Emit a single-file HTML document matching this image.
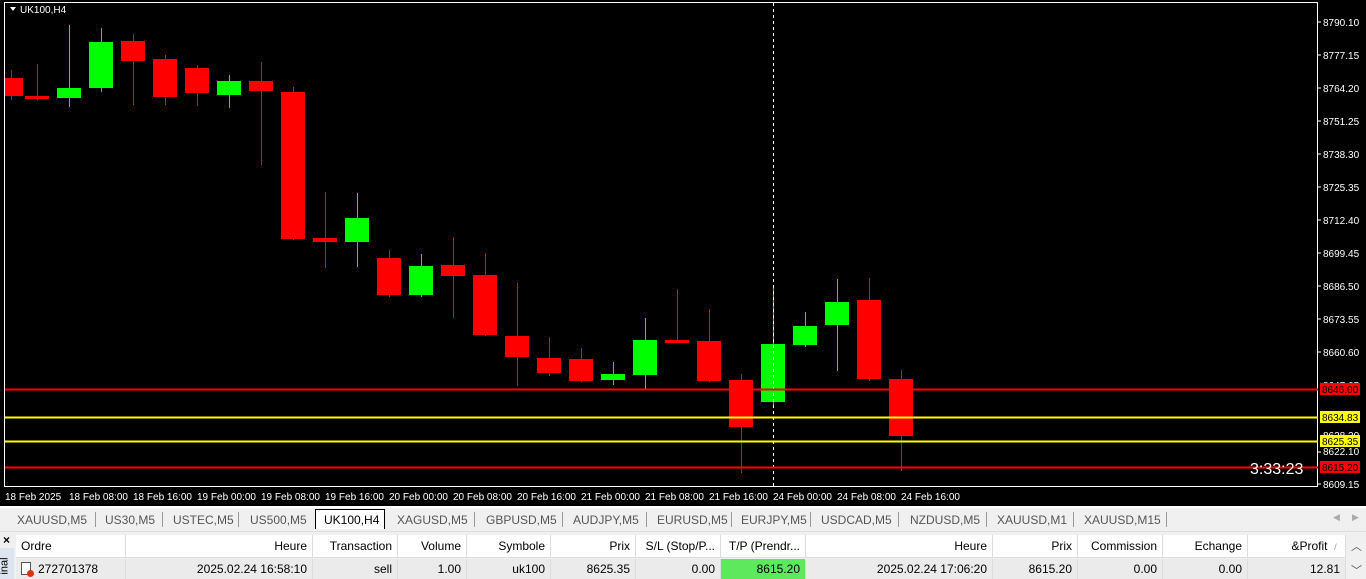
<!DOCTYPE html>
<html><head><meta charset="utf-8"><style>
body{margin:0;width:1366px;height:579px;overflow:hidden;background:#f0f0f0;font-family:"Liberation Sans",sans-serif;position:relative}
.a{position:absolute;white-space:nowrap}
#chart{position:absolute;left:0;top:0}
.tab{position:absolute;top:513px;font-size:12px;color:#555}
.sep{position:absolute;top:512px;width:1px;height:15px;background:#999}
.h{position:absolute;top:535px;height:23px;line-height:23px;font-size:12px;color:#000;background:#fff;border-right:1px solid #ddd;box-sizing:border-box;padding:0 5px;border-bottom:1px solid #ddd}
.r{position:absolute;top:559px;height:20px;line-height:20px;font-size:12px;color:#000;background:#ebebeb;border-right:1px solid #ddd;box-sizing:border-box;padding:0 5px}
</style></head><body>
<svg id="chart" width="1366" height="506" xmlns="http://www.w3.org/2000/svg" font-family="Liberation Sans, sans-serif">
<rect x="0" y="0" width="1366" height="506" fill="#000"/>
<rect x="4.5" y="2.5" width="1313" height="484" fill="none" stroke="#fff"/>
<g id="c"></g>
<line x1="773.5" y1="3" x2="773.5" y2="486" stroke="#fff" stroke-dasharray="3,3"/>
<line x1="5" y1="389.5" x2="1318" y2="389.5" stroke="#f00" stroke-width="2"/>
<line x1="5" y1="417.5" x2="1318" y2="417.5" stroke="#ff0" stroke-width="2"/>
<line x1="5" y1="441.5" x2="1318" y2="441.5" stroke="#ff0" stroke-width="2"/>
<line x1="5" y1="467.5" x2="1318" y2="467.5" stroke="#f00" stroke-width="2"/>
<path d="M10 7 L16 7 L13 11 Z" fill="#fff"/>
<text x="20" y="13" fill="#fff" font-size="10">UK100,H4</text>
<g fill="#fff" font-size="10">
<text x="1323" y="26">8790.10</text><text x="1323" y="59">8777.15</text><text x="1323" y="92">8764.20</text><text x="1323" y="125">8751.25</text><text x="1323" y="158">8738.30</text><text x="1323" y="191">8725.35</text><text x="1323" y="224">8712.40</text><text x="1323" y="257">8699.45</text><text x="1323" y="290">8686.50</text><text x="1323" y="323">8673.55</text><text x="1323" y="356">8660.60</text><text x="1323" y="389">8647.65</text><text x="1323" y="439">8628.20</text><text x="1323" y="455">8622.10</text><text x="1323" y="488">8609.15</text>
</g>
<g stroke="#fff"><line x1="1318" y1="22" x2="1321" y2="22"/><line x1="1318" y1="55" x2="1321" y2="55"/><line x1="1318" y1="88" x2="1321" y2="88"/><line x1="1318" y1="121" x2="1321" y2="121"/><line x1="1318" y1="154" x2="1321" y2="154"/><line x1="1318" y1="187" x2="1321" y2="187"/><line x1="1318" y1="220" x2="1321" y2="220"/><line x1="1318" y1="253" x2="1321" y2="253"/><line x1="1318" y1="286" x2="1321" y2="286"/><line x1="1318" y1="319" x2="1321" y2="319"/><line x1="1318" y1="352" x2="1321" y2="352"/><line x1="1318" y1="452" x2="1321" y2="452"/><line x1="1318" y1="484" x2="1321" y2="484"/></g>
<rect x="1320" y="383" width="40" height="12" fill="#f00"/><text x="1322" y="393" font-size="10" fill="#000">8646.00</text>
<rect x="1320" y="411" width="40" height="12" fill="#ff0"/><text x="1322" y="421" font-size="10" fill="#000">8634.83</text>
<rect x="1320" y="435" width="40" height="12" fill="#ff0"/><text x="1322" y="445" font-size="10" fill="#000">8625.35</text>
<rect x="1320" y="461" width="40" height="12" fill="#f00"/><text x="1322" y="471" font-size="10" fill="#000">8615.20</text>
<text x="1250" y="474" font-size="16" fill="#fff">3:33:23</text>
<g fill="#fff" font-size="10">
<text x="5" y="500">18 Feb 2025</text><text x="69" y="500">18 Feb 08:00</text><text x="133" y="500">18 Feb 16:00</text><text x="197" y="500">19 Feb 00:00</text><text x="261" y="500">19 Feb 08:00</text><text x="325" y="500">19 Feb 16:00</text><text x="389" y="500">20 Feb 00:00</text><text x="453" y="500">20 Feb 08:00</text><text x="517" y="500">20 Feb 16:00</text><text x="581" y="500">21 Feb 00:00</text><text x="645" y="500">21 Feb 08:00</text><text x="709" y="500">21 Feb 16:00</text><text x="773" y="500">24 Feb 00:00</text><text x="837" y="500">24 Feb 08:00</text><text x="901" y="500">24 Feb 16:00</text>
</g>
</svg>
<div class="a" style="left:0;top:506px;width:1366px;height:2px;background:#fff"></div>
<div class="a" style="left:315px;top:509px;width:70px;height:20px;background:#fff;border:1px solid #000;border-bottom:none;box-sizing:border-box"></div>
<span class="tab" style="left:17px">XAUUSD,M5</span><span class="sep" style="left:95px"></span>
<span class="tab" style="left:105px">US30,M5</span><span class="sep" style="left:162px"></span>
<span class="tab" style="left:173px">USTEC,M5</span><span class="sep" style="left:238px"></span>
<span class="tab" style="left:250px">US500,M5</span>
<span class="tab" style="left:324px;color:#000">UK100,H4</span>
<span class="tab" style="left:397px">XAGUSD,M5</span><span class="sep" style="left:474px"></span>
<span class="tab" style="left:486px">GBPUSD,M5</span><span class="sep" style="left:562px"></span>
<span class="tab" style="left:573px">AUDJPY,M5</span><span class="sep" style="left:646px"></span>
<span class="tab" style="left:657px">EURUSD,M5</span><span class="sep" style="left:731px"></span>
<span class="tab" style="left:741px">EURJPY,M5</span><span class="sep" style="left:810px"></span>
<span class="tab" style="left:821px">USDCAD,M5</span><span class="sep" style="left:898px"></span>
<span class="tab" style="left:910px">NZDUSD,M5</span><span class="sep" style="left:986px"></span>
<span class="tab" style="left:997px">XAUUSD,M1</span><span class="sep" style="left:1073px"></span>
<span class="tab" style="left:1084px">XAUUSD,M15</span><span class="sep" style="left:1166px"></span>
<span class="a" style="left:1333px;top:512px;font-size:9px;color:#aaa">◀</span><span class="a" style="left:1352px;top:512px;font-size:9px;color:#aaa">▶</span>
<div class="a" style="left:0;top:531px;width:1366px;height:1px;background:#ddd"></div>
<span class="a" style="left:3px;top:533px;font-size:12px;font-weight:bold">×</span>
<div class="a" style="left:0;top:548px;width:14px;height:31px;background:#dde6f0"></div>
<span class="a" style="left:-4px;top:560px;font-size:11px;transform:rotate(-90deg)">inal</span>
<div class="h" style="left:16px;width:110px">Ordre</div>
<div class="h" style="left:126px;width:187px;text-align:right">Heure</div>
<div class="h" style="left:313px;width:85px;text-align:right">Transaction</div>
<div class="h" style="left:398px;width:69px;text-align:right">Volume</div>
<div class="h" style="left:467px;width:84px;text-align:right">Symbole</div>
<div class="h" style="left:551px;width:85px;text-align:right">Prix</div>
<div class="h" style="left:636px;width:85px;text-align:right">S/L (Stop/P...</div>
<div class="h" style="left:721px;width:85px;text-align:right">T/P (Prendr...</div>
<div class="h" style="left:806px;width:187px;text-align:right">Heure</div>
<div class="h" style="left:993px;width:85px;text-align:right">Prix</div>
<div class="h" style="left:1078px;width:85px;text-align:right">Commission</div>
<div class="h" style="left:1163px;width:85px;text-align:right">Echange</div>
<div class="h" style="left:1248px;width:98px;text-align:right">&amp;Profit &nbsp;<span style="color:#999;font-size:9px">/</span>&nbsp;</div>
<div class="r" style="left:16px;width:110px;padding-left:22px">272701378</div>
<div class="a" style="left:21px;top:562px;width:10px;height:13px;border:1px solid #555;background:#fff;box-sizing:border-box"></div>
<div class="a" style="left:27px;top:570px;width:7px;height:7px;border-radius:50%;background:#e03010"></div>
<div class="r" style="left:126px;width:187px;text-align:right">2025.02.24 16:58:10</div>
<div class="r" style="left:313px;width:85px;text-align:right">sell</div>
<div class="r" style="left:398px;width:69px;text-align:right">1.00</div>
<div class="r" style="left:467px;width:84px;text-align:right">uk100</div>
<div class="r" style="left:551px;width:85px;text-align:right">8625.35</div>
<div class="r" style="left:636px;width:85px;text-align:right">0.00</div>
<div class="r" style="left:721px;width:85px;text-align:right;background:#5ee85e">8615.20</div>
<div class="r" style="left:806px;width:187px;text-align:right">2025.02.24 17:06:20</div>
<div class="r" style="left:993px;width:85px;text-align:right">8615.20</div>
<div class="r" style="left:1078px;width:85px;text-align:right">0.00</div>
<div class="r" style="left:1163px;width:85px;text-align:right">0.00</div>
<div class="r" style="left:1248px;width:98px;text-align:right">12.81</div>
<div class="a" style="left:1346px;top:535px;width:20px;height:44px;background:#f0f0f0"></div>
<span class="a" style="left:1351px;top:538px;font-size:11px;color:#555">︿</span>
<span class="a" style="left:1351px;top:562px;font-size:11px;color:#555">﹀</span>
<script>
var d=[[11,'r',78,96,70,100],[37,'r',96,98,64,100],[69,'g',88,98,25,107],[101,'g',42,88,28,92],[133,'r',41,61,34,105],[165,'r',59,97,55,105],[197,'r',68,93,65,106],[229,'g',81,95,75,108],[261,'r',81,91,62,165],[293,'r',92,239,87,240],[325,'r',238,242,192,268],[357,'g',218,242,193,267],[389,'r',258,295,250,297],[421,'g',266,295,254,297],[453,'r',265,276,237,318],[485,'r',275,335,253,336],[517,'r',336,357,283,386],[549,'r',358,373,337,376],[581,'r',359,381,348,382],[613,'g',374,380,362,385],[645,'g',340,375,318,390],[677,'r',340,342,289,343],[709,'r',341,381,309,382],[741,'r',380,427,374,473],[773,'g',344,402,287,405],[805,'g',326,345,312,347],[837,'g',302,325,279,371],[869,'r',300,379,278,381],[901,'r',379,436,370,471]];
var s='';d.forEach(function(c){var col=c[1]=='r'?'#ff0000':'#00ff00';var x0=Math.max(5,c[0]-12);var w=c[0]+12-x0;
s+='<rect x="'+c[0]+'" y="'+c[4]+'" width="1" height="'+(c[5]-c[4])+'" fill="'+col+'"/>';
s+='<rect x="'+x0+'" y="'+c[2]+'" width="'+w+'" height="'+Math.max(3,c[3]-c[2])+'" fill="'+col+'"/>';});
document.getElementById('c').innerHTML=s;
</script>
</body></html>
